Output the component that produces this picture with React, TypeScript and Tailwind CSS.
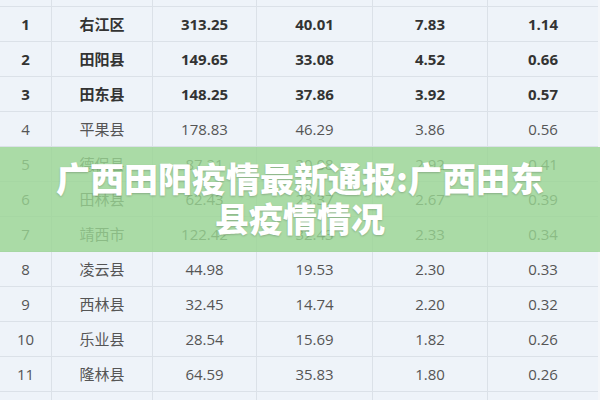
const rows: [string, string, string, string, string, string][] = [
  ["", "", "", "", "", ""],
  ["1", "右江区", "313.25", "40.01", "7.83", "1.14"],
  ["2", "田阳县", "149.65", "33.08", "4.52", "0.66"],
  ["3", "田东县", "148.25", "37.86", "3.92", "0.57"],
  ["4", "平果县", "178.83", "46.29", "3.86", "0.56"],
  ["5", "德保县", "87.21", "20.08", "2.92", "0.41"],
  ["6", "田林县", "62.43", "23.37", "2.67", "0.39"],
  ["7", "靖西市", "122.42", "32.43", "2.33", "0.34"],
  ["8", "凌云县", "44.98", "19.53", "2.30", "0.33"],
  ["9", "西林县", "32.45", "14.74", "2.20", "0.32"],
  ["10", "乐业县", "28.54", "15.69", "1.82", "0.26"],
  ["11", "隆林县", "64.59", "35.83", "1.80", "0.26"],
  ["", "", "", "", "", ""],
];

const widths = ["w-[52px]", "w-[101px]", "w-[104px]", "w-[116px]", "w-[115px]", "w-[110px]"];

const App = () => {
  return (
    <div
      className="relative w-[600px] h-[400px] overflow-hidden bg-[#f4f6f9]"
      style={{ fontFamily: '"Open Sans", "Noto Sans CJK SC", sans-serif' }}
    >
      <div className="-mt-[28px] w-[598px] bg-[#eef3f9]">
        {rows.map((r, i) => {
          const bold = i >= 1 && i <= 3;
          return (
            <div key={i} className="flex h-[35px] border-b border-[#dbe1e8]">
              {r.map((c, j) => (
                <div
                  key={j}
                  className={`${widths[j]} flex items-center justify-center text-[15px] ${
                    j < 5 ? "border-r border-[#dbe1e8]" : ""
                  } ${bold ? "font-bold text-[#333333]" : "text-[#555555]"}`}
                >
                  {c}
                </div>
              ))}
            </div>
          );
        })}
      </div>

      <div className="absolute left-0 top-[147px] w-[600px] h-[105px] bg-[#98d591]/80 flex items-center justify-center">
        <div
          className="text-white font-black text-[34px] leading-[40px] text-center whitespace-nowrap pb-[3px] [text-shadow:0_1px_2px_rgba(0,0,0,0.2)]"
          style={{ fontFamily: '"Noto Sans CJK SC", sans-serif' }}
        >
          广西田阳疫情最新通报:广西田东
          <br />
          县疫情情况
        </div>
      </div>
    </div>
  );
};

export default App;
